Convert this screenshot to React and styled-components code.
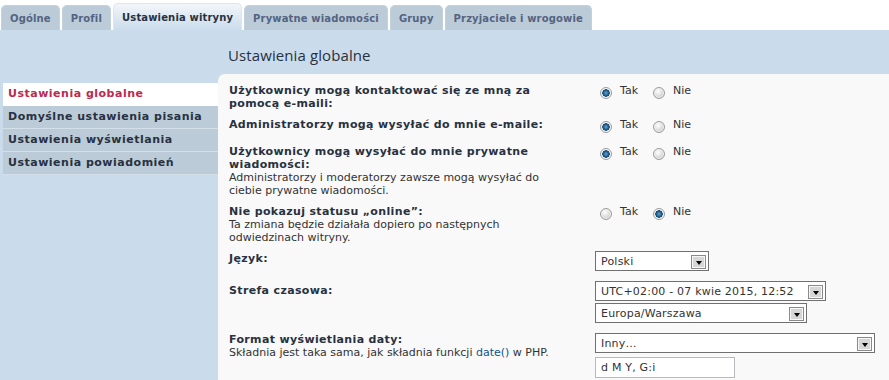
import React from "react";
import styled, { createGlobalStyle } from "styled-components";

const GlobalStyle = createGlobalStyle`
  html, body { margin: 0; padding: 0; background: #fff; }
  body {
    font-family: "DejaVu Sans", Verdana, sans-serif;
    font-size: 11px;
    color: #333;
  }
  * { box-sizing: border-box; }
`;

const Page = styled.div`
  width: 889px;
  height: 380px;
  overflow: hidden;
  display: flex;
  flex-direction: column;
`;

const TabBar = styled.div`
  flex-shrink: 0;
  display: flex;
  align-items: flex-end;
  gap: 2px;
  height: 30px;
  padding-left: 1px;
  background: #fff;
`;

const Tab = styled.div`
  height: ${(p) => (p.$active ? 27 : 25)}px;
  padding: 1px 8px 0;
  display: flex;
  align-items: center;
  border-radius: 5px 5px 0 0;
  font-weight: bold;
  font-size: 10px;
  letter-spacing: 0.15px;
  white-space: nowrap;
  color: ${(p) => (p.$active ? "#28313f" : "#536482")};
  background: ${(p) =>
    p.$active ? "linear-gradient(#f2f6fa, #cadceb)" : "#bccbd8"};
  border: 1px solid ${(p) => (p.$active ? "#dbe6ef" : "#c3d1dd")};
  border-bottom: none;
`;

const Panel = styled.div`
  flex: 1 0 auto;
  background: #cadceb;
  display: flex;
  flex-direction: column;
`;

const Header = styled.div`
  flex-shrink: 0;
  height: 44px;
  padding: 6px 0 0 228px;
  display: flex;
  align-items: center;
`;

const Title = styled.h2`
  margin: 0;
  font-family: "Open Sans", "DejaVu Sans", sans-serif;
  font-weight: normal;
  font-size: 15px;
  letter-spacing: 0.1px;
  color: #28313f;
`;

const Body = styled.div`
  flex: 1 0 auto;
  display: flex;
  align-items: stretch;
`;

const Menu = styled.ul`
  list-style: none;
  margin: 9px 0 0 3px;
  padding: 0;
  width: 215px;
  align-self: flex-start;
`;

const MenuItem = styled.li`
  height: 23px;
  line-height: 22px;
  padding-left: 5px;
  font-weight: bold;
  letter-spacing: 0.5px;
  white-space: nowrap;
  background: ${(p) => (p.$active ? "#ffffff" : "#bccbd8")};
  color: ${(p) => (p.$active ? "#bc2a4d" : "#28313f")};
  border-bottom: 1px solid ${(p) => (p.$active ? "#ffffff" : "#d3dfe9")};
`;

const Main = styled.div`
  flex: 1;
  background: #f9f9f9;
  border-top-left-radius: 7px;
  padding: 6px 0 0 11px;
`;

const Row = styled.div`
  display: grid;
  grid-template-columns: 366px 1fr;
  padding: ${(p) => p.$pt ?? 4}px 0 ${(p) => p.$pb ?? 4}px;
`;

const LabelCell = styled.div`
  padding: ${(p) => p.$top || 0}px 20px 0 0;
  line-height: 13px;
`;

const LabelText = styled.div`
  font-weight: bold;
  letter-spacing: 0.35px;
  color: #28313f;
`;

const Desc = styled.div`
  color: #333;
`;

const Link = styled.a`
  color: #105289;
  text-decoration: none;
`;

const Controls = styled.div`
  display: flex;
  flex-direction: column;
  align-items: flex-start;
  gap: 2px;
`;

const RadioLine = styled.div`
  display: flex;
  align-items: flex-start;
  height: 19px;
  padding-left: 5px;
`;

const RadioLabel = styled.label`
  display: flex;
  align-items: flex-start;
  gap: 8px;
  margin-right: 15px;
  color: #333;
  line-height: 13px;
`;

const RadioDot = styled.span`
  display: inline-block;
  width: 12px;
  height: 12px;
  margin-top: 3px;
  border-radius: 50%;
  border: 1px solid #9c9c9c;
  background: ${(p) =>
    p.$checked
      ? "radial-gradient(circle at 50% 50%, #6fa6cf 0, #2a6c9e 2px, #11466f 3.5px, #e9e9e9 4px, #ffffff 5px)"
      : "radial-gradient(circle at 40% 35%, #ffffff 0, #e8e8e8 3px, #cfcfcf 6px)"};
  box-shadow: inset 0 0 0 1px #f4f4f4;
`;

const SelectBox = styled.div`
  width: ${(p) => p.$w}px;
  height: 20px;
  border: 1px solid #707070;
  background: #fff;
  display: flex;
  align-items: center;
  justify-content: space-between;
  padding: 0 2px 0 5px;
  color: #333;
  letter-spacing: 0.2px;
  white-space: nowrap;
`;

const ArrowBox = styled.span`
  width: 15px;
  height: 14px;
  margin-top: 1px;
  border: 1px solid #8a8a8a;
  box-shadow: inset 0 0 0 1px #f6f6f6;
  background: #d6d6d6;
  display: flex;
  align-items: center;
  justify-content: center;
  &::after {
    content: "";
    width: 0;
    height: 0;
    margin-top: 2px;
    border-left: 3.5px solid transparent;
    border-right: 3.5px solid transparent;
    border-top: 4px solid #000;
  }
`;

const TextInput = styled.div`
  width: 140px;
  height: 21px;
  margin-top: 2px;
  border: 1px solid #b4bac0;
  background: #fff;
  display: flex;
  align-items: center;
  padding-left: 5px;
  letter-spacing: 0.2px;
  color: #333;
`;

const Select = ({ w, children }) => (
  <SelectBox $w={w}>
    <span>{children}</span>
    <ArrowBox />
  </SelectBox>
);

const RadioPair = ({ yes }) => (
  <RadioLine>
    <RadioLabel>
      <RadioDot $checked={yes} />
      Tak
    </RadioLabel>
    <RadioLabel>
      <RadioDot $checked={!yes} />
      Nie
    </RadioLabel>
  </RadioLine>
);

const tabs = [
  "Ogólne",
  "Profil",
  "Ustawienia witryny",
  "Prywatne wiadomości",
  "Grupy",
  "Przyjaciele i wrogowie",
];

const menu = [
  "Ustawienia globalne",
  "Domyślne ustawienia pisania",
  "Ustawienia wyświetlania",
  "Ustawienia powiadomień",
];

export default function App() {
  return (
    <Page>
      <GlobalStyle />
      <TabBar>
        {tabs.map((t) => (
          <Tab key={t} $active={t === "Ustawienia witryny"}>
            {t}
          </Tab>
        ))}
      </TabBar>
      <Panel>
        <Header>
          <Title>Ustawienia globalne</Title>
        </Header>
        <Body>
          <Menu>
            {menu.map((m, i) => (
              <MenuItem key={m} $active={i === 0}>
                {m}
              </MenuItem>
            ))}
          </Menu>
          <Main>
            <Row>
              <LabelCell>
                <LabelText>Użytkownicy mogą kontaktować się ze mną za pomocą e-maili:</LabelText>
              </LabelCell>
              <Controls>
                <RadioPair yes />
              </Controls>
            </Row>
            <Row>
              <LabelCell>
                <LabelText>Administratorzy mogą wysyłać do mnie e-maile:</LabelText>
              </LabelCell>
              <Controls>
                <RadioPair yes />
              </Controls>
            </Row>
            <Row>
              <LabelCell>
                <LabelText>Użytkownicy mogą wysyłać do mnie prywatne wiadomości:</LabelText>
                <Desc>Administratorzy i moderatorzy zawsze mogą wysyłać do ciebie prywatne wiadomości.</Desc>
              </LabelCell>
              <Controls>
                <RadioPair yes />
              </Controls>
            </Row>
            <Row>
              <LabelCell>
                <LabelText>Nie pokazuj statusu „online”:</LabelText>
                <Desc>Ta zmiana będzie działała dopiero po następnych odwiedzinach witryny.</Desc>
              </LabelCell>
              <Controls>
                <RadioPair yes={false} />
              </Controls>
            </Row>
            <Row $pt={3} $pb={5}>
              <LabelCell $top={1}>
                <LabelText>Język:</LabelText>
              </LabelCell>
              <Controls>
                <Select w={114}>Polski</Select>
              </Controls>
            </Row>
            <Row $pt={5} $pb={5}>
              <LabelCell $top={3}>
                <LabelText>Strefa czasowa:</LabelText>
              </LabelCell>
              <Controls>
                <Select w={231}>UTC+02:00 - 07 kwie 2015, 12:52</Select>
                <Select w={212}>Europa/Warszawa</Select>
              </Controls>
            </Row>
            <Row $pt={5} $pb={5}>
              <LabelCell $top={0}>
                <LabelText>Format wyświetlania daty:</LabelText>
                <Desc>
                  Składnia jest taka sama, jak składnia funkcji <Link>date()</Link> w PHP.
                </Desc>
              </LabelCell>
              <Controls>
                <Select w={280}>Inny…</Select>
                <TextInput>d M Y, G:i</TextInput>
              </Controls>
            </Row>
          </Main>
        </Body>
      </Panel>
    </Page>
  );
}
